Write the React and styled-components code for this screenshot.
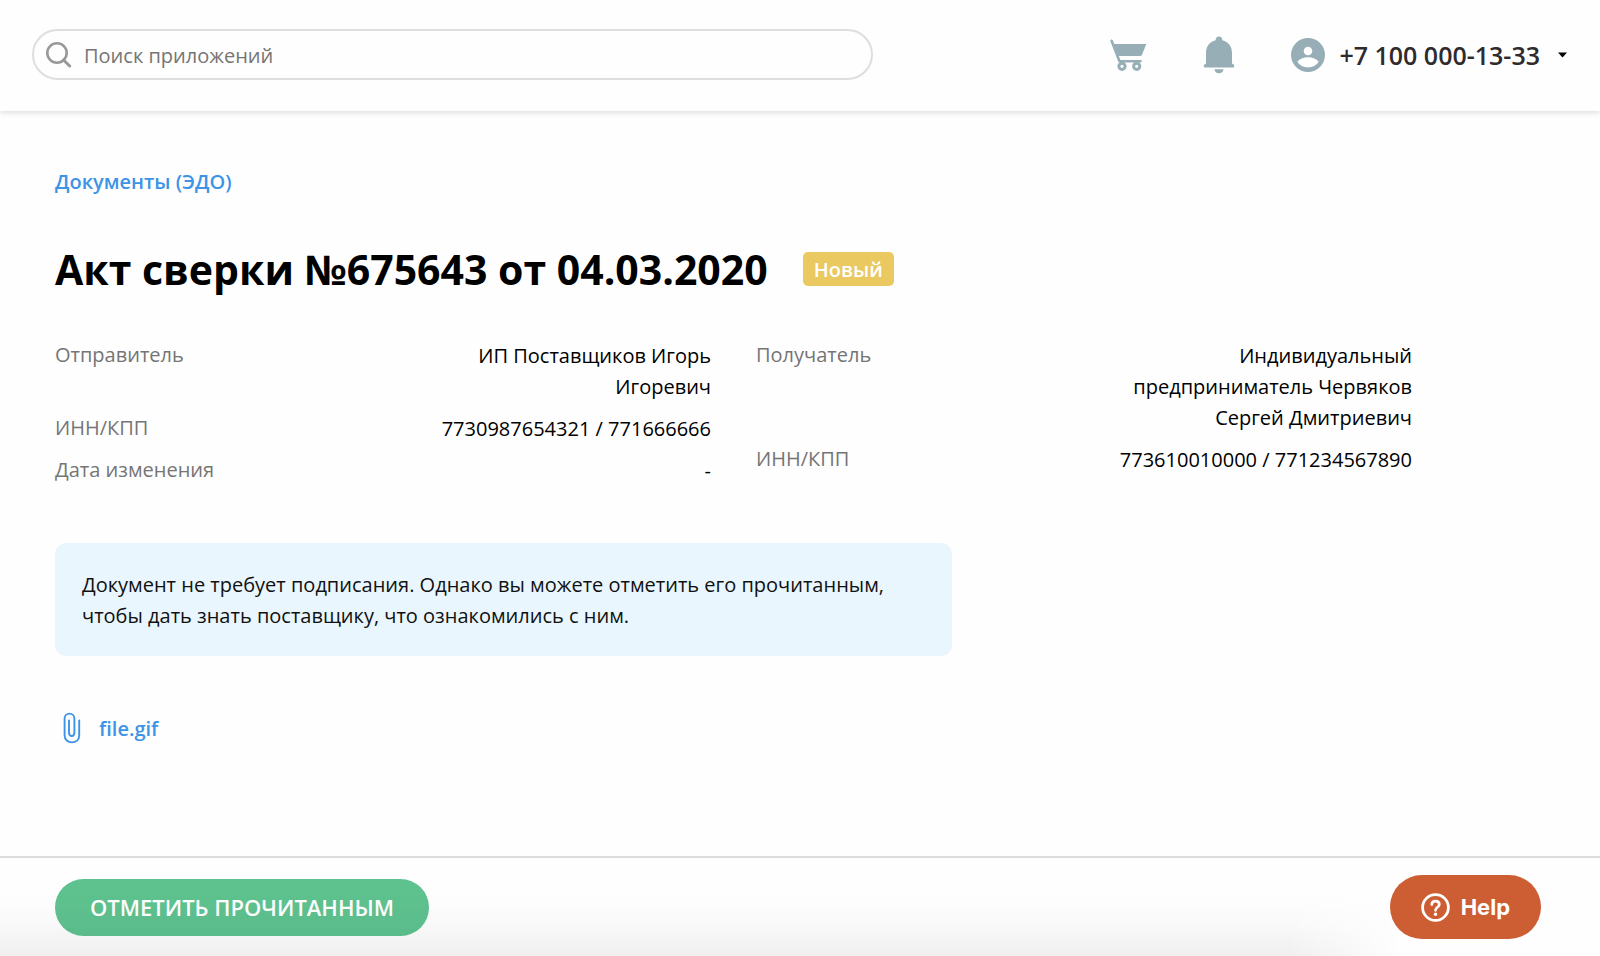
import React from "react";
import styled, { createGlobalStyle } from "styled-components";

const GlobalStyle = createGlobalStyle`
  *, *::before, *::after { box-sizing: border-box; }
  body {
    margin: 0;
    background: #fefefe;
    color: #000;
    font-family: "Open Sans", "Noto Sans", sans-serif;
    font-size: 20px;
    line-height: 31px;
  }
  button, input { font-family: inherit; }
`;

const Page = styled.div`
  display: flex;
  flex-direction: column;
  min-height: 100vh;
`;

const Header = styled.header`
  display: flex;
  align-items: center;
  justify-content: space-between;
  padding: 29px 32px 31px;
  background: #fefefe;
  box-shadow: 0 2px 5px rgba(0, 0, 0, 0.12);
`;

const SearchBox = styled.label`
  display: flex;
  align-items: center;
  gap: 12px;
  width: 55%;
  max-width: 841px;
  height: 51px;
  padding: 0 12px;
  border: 2px solid #dedede;
  border-radius: 26px;
`;

const SearchInput = styled.input`
  flex: 1;
  min-width: 0;
  padding: 3px 0 0;
  border: 0;
  outline: 0;
  background: none;
  color: #333;
  font-size: 20px;
  line-height: 30px;

  &::placeholder {
    color: #757575;
    opacity: 1;
  }
`;

const HeaderActions = styled.div`
  display: flex;
  align-items: center;
`;

const IconButton = styled.button`
  display: flex;
  margin-right: 56px;
  padding: 0;
  border: 0;
  background: none;
  color: #97aeb6;
  cursor: pointer;
`;

const AccountButton = styled.button`
  display: flex;
  align-items: center;
  gap: 14px;
  padding: 0 1px 0 0;
  border: 0;
  background: none;
  color: #2f2b2d;
  font-size: 25px;
  font-weight: 600;
  line-height: 34px;
  cursor: pointer;

  svg:first-child { color: #97aeb6; }
  svg:last-child { margin-left: 4px; color: #000; }
`;

const Main = styled.main`
  flex: 1;
  display: flex;
  flex-direction: column;
  align-items: flex-start;
  padding: 55px 55px 96px;
`;

const TextLink = styled.a`
  color: #3d94e6;
  font-weight: 600;
  text-decoration: none;
`;

const TitleRow = styled.div`
  display: flex;
  align-items: center;
  gap: 35px;
  margin-top: 44px;
`;

const Title = styled.h1`
  margin: 0;
  font-size: 41px;
  font-weight: 700;
  line-height: 56px;
`;

const Badge = styled.span`
  padding: 2px 11px 0;
  border-radius: 5px;
  background: #eac960;
  color: #fff;
  font-weight: 600;
  line-height: 32px;
`;

const Parties = styled.div`
  display: grid;
  grid-template-columns: 1fr 1fr;
  gap: 45px;
  width: 92%;
  max-width: 1357px;
  margin-top: 43px;
`;

const Details = styled.dl`
  display: flex;
  flex-direction: column;
  gap: 11px;
  margin: 0;
`;

const DetailRow = styled.div`
  display: flex;
  justify-content: space-between;
`;

const Term = styled.dt`
  color: #757575;
  line-height: 29px;
`;

const Value = styled.dd`
  width: 46%;
  margin: 0;
  text-align: right;
`;

const Notice = styled.p`
  width: 100%;
  max-width: 897px;
  margin: 57px 0 0;
  padding: 26px 64px 25px 27px;
  border-radius: 11px;
  background: #e9f6fd;
  color: #111;
`;

const FileLink = styled(TextLink)`
  display: flex;
  align-items: center;
  gap: 18px;
  margin-top: 56px;
  padding-left: 8px;
`;

const Footer = styled.footer`
  position: relative;
  display: flex;
  align-items: center;
  justify-content: space-between;
  padding: 17px 59px 17px 55px;
  border-top: 2px solid #dcdcdc;

  &::after {
    content: "";
    position: absolute;
    inset: auto 200px 0 0;
    height: 64px;
    background: linear-gradient(to bottom, rgba(0, 0, 0, 0), rgba(0, 0, 0, 0.02) 50%, rgba(0, 0, 0, 0.06));
    mask-image: linear-gradient(to right, #000 92%, transparent);
    pointer-events: none;
  }
`;

const PrimaryButton = styled.button`
  height: 57px;
  padding: 0 35px;
  border: 0;
  border-radius: 29px;
  background: #5ec28f;
  color: #fff;
  font-size: 22px;
  font-weight: 600;
  text-transform: uppercase;
  cursor: pointer;
`;

const HelpButton = styled.button`
  display: flex;
  align-items: center;
  gap: 11px;
  height: 64px;
  padding: 0 31px;
  border: 0;
  border-radius: 32px;
  background: #cd5e33;
  color: #fff;
  font-family: Inter, sans-serif;
  font-size: 22px;
  font-weight: 700;
  cursor: pointer;
`;

const SearchIcon = () => (
  <svg width="26" height="28" viewBox="0 0 26 28" fill="none" stroke="#999" aria-hidden="true">
    <circle cx="11" cy="12" r="9.7" strokeWidth="2.6" />
    <path d="M17.5 19 23.7 25" strokeWidth="3" strokeLinecap="round" />
  </svg>
);

const CartIcon = () => (
  <svg width="38" height="32" viewBox="0 0 38 32" fill="none" stroke="currentColor" aria-hidden="true">
    <path d="M2.6 1.8 10.5 22.2H31.5" strokeWidth="2.6" strokeLinecap="round" strokeLinejoin="round" />
    <path d="M4.5 5H37.3L33 15.8Q32.5 17 31 17H9.3Z" fill="currentColor" stroke="none" />
    <circle cx="13" cy="27.3" r="3.1" strokeWidth="3" />
    <circle cx="27.7" cy="27.3" r="3.1" strokeWidth="3" />
  </svg>
);

const BellIcon = () => (
  <svg width="32" height="38" viewBox="0 0 32 38" fill="currentColor" aria-hidden="true">
    <path d="M16 .5C18 .5 19.3 2 19.4 4.2 25.5 5.8 29 10.6 29 17V27.6L30.3 28.2Q31.6 29 31.2 30.4 30.8 31.6 29.4 31.6H2.6Q1.2 31.6.8 30.4.4 29 1.7 28.2L3 27.6V17C3 10.6 6.5 5.8 12.6 4.2 12.7 2 14 .5 16 .5Z" />
    <path d="M11.5 33.2H20.5Q20 37.3 16 37.3T11.5 33.2Z" />
  </svg>
);

const UserIcon = () => (
  <svg width="34" height="34" viewBox="0 0 34 34" aria-hidden="true">
    <circle cx="17" cy="17" r="17" fill="currentColor" />
    <circle cx="17" cy="13" r="4.3" fill="#fff" />
    <path d="M6.3 23.8Q10 19.3 17 19.3T27.7 23.8Q24 29.5 17 29.5T6.3 23.8Z" fill="#fff" />
  </svg>
);

const CaretIcon = () => (
  <svg width="9" height="6" viewBox="0 0 9 6" aria-hidden="true">
    <path d="M0 .5H9L4.5 5.5Z" fill="currentColor" />
  </svg>
);

const ClipIcon = () => (
  <svg width="18" height="32" viewBox="0 0 18 32" fill="none" stroke="currentColor" strokeWidth="1.9" strokeLinecap="round" aria-hidden="true">
    <path d="M16.2 8.5V23.2C16.2 27.8 13 30.4 9 30.4S1.6 27.8 1.6 23.2V6.6C1.6 3.4 3.8 1.6 6.4 1.6S11.4 3.4 11.4 6.6V20.5C11.4 22.8 10.4 24 8.8 24S6 22.8 6 20.5V8.5" />
  </svg>
);

const HelpIcon = () => (
  <svg width="29" height="29" viewBox="0 0 29 29" fill="none" stroke="#fff" strokeLinecap="round" aria-hidden="true">
    <circle cx="14.5" cy="14.5" r="12.9" strokeWidth="2.8" />
    <path d="M10.8 11.6C10.8 9.4 12.3 8.2 14.5 8.2S18.3 9.5 18.3 11.4C18.3 14.2 14.5 14.3 14.5 17.3" strokeWidth="2.7" />
    <circle cx="14.5" cy="21.3" r="1.7" fill="#fff" stroke="none" />
  </svg>
);

const sender = [
  ["Отправитель", "ИП Поставщиков Игорь Игоревич"],
  ["ИНН/КПП", "7730987654321 / 771666666"],
  ["Дата изменения", "-"],
];

const recipient = [
  ["Получатель", "Индивидуальный предприниматель Червяков Сергей Дмитриевич"],
  ["ИНН/КПП", "773610010000 / 771234567890"],
];

const DetailList = ({ rows }) => (
  <Details>
    {rows.map(([term, value]) => (
      <DetailRow key={term}>
        <Term>{term}</Term>
        <Value>{value}</Value>
      </DetailRow>
    ))}
  </Details>
);

export default function App() {
  return (
    <Page>
      <GlobalStyle />
      <Header>
        <SearchBox>
          <SearchIcon />
          <SearchInput type="search" placeholder="Поиск приложений" aria-label="Поиск приложений" />
        </SearchBox>
        <HeaderActions>
          <IconButton type="button" aria-label="Корзина"><CartIcon /></IconButton>
          <IconButton type="button" aria-label="Уведомления"><BellIcon /></IconButton>
          <AccountButton type="button">
            <UserIcon />
            +7 100 000-13-33
            <CaretIcon />
          </AccountButton>
        </HeaderActions>
      </Header>
      <Main>
        <TextLink href="#documents">Документы (ЭДО)</TextLink>
        <TitleRow>
          <Title>Акт сверки №675643 от 04.03.2020</Title>
          <Badge>Новый</Badge>
        </TitleRow>
        <Parties>
          <DetailList rows={sender} />
          <DetailList rows={recipient} />
        </Parties>
        <Notice>
          Документ не требует подписания. Однако вы можете отметить его прочитанным, чтобы дать знать поставщику, что ознакомились с ним.
        </Notice>
        <FileLink href="#file">
          <ClipIcon />
          file.gif
        </FileLink>
      </Main>
      <Footer>
        <PrimaryButton type="button">Отметить прочитанным</PrimaryButton>
        <HelpButton type="button">
          <HelpIcon />
          Help
        </HelpButton>
      </Footer>
    </Page>
  );
}
